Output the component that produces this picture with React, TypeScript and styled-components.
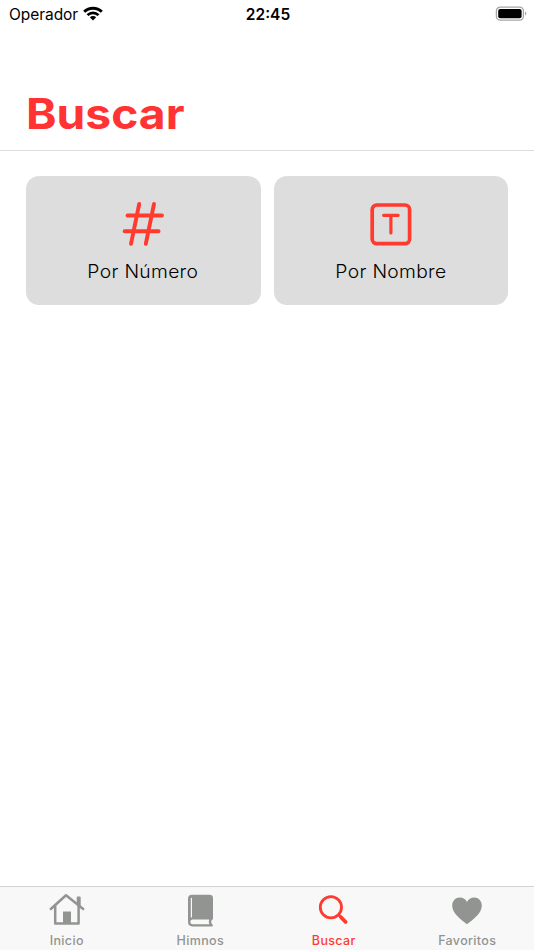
import React from "react";
import styled, { createGlobalStyle } from "styled-components";

const GlobalStyle = createGlobalStyle`
  * { box-sizing: border-box; }
  html, body { margin: 0; padding: 0; background: #fff; }
  body { font-family: Inter, "Liberation Sans", sans-serif; color: #000; overflow: hidden; }
  svg { display: block; }
`;

const Screen = styled.div`
  display: flex;
  flex-direction: column;
  width: 534px;
  height: 950px;
  background: #fff;
`;

const StatusBar = styled.div`
  display: grid;
  grid-template-columns: 1fr auto 1fr;
  align-items: center;
  height: 27px;
  padding: 0 7px 0 9px;
  flex: none;
`;

const Carrier = styled.div`
  display: flex;
  align-items: center;
  gap: 5px;
  font-size: 15.5px;
  line-height: 27px;
  letter-spacing: -0.05px;
`;

const CarrierName = styled.span`
  padding-top: 1px;
`;

const Clock = styled.div`
  padding-top: 1px;
  font-size: 15.5px;
  font-weight: 600;
  line-height: 27px;
  letter-spacing: 0;
`;

const Battery = styled.div`
  justify-self: end;
`;

const Header = styled.header`
  display: flex;
  align-items: flex-end;
  height: 124px;
  padding: 0 26px 10px;
  border-bottom: 1px solid #dcdcdc;
  flex: none;
`;

const Title = styled.h1`
  margin: 0;
  font-size: 42px;
  line-height: 52px;
  font-weight: 700;
  color: #ff3333;
  transform: scaleX(1.1);
  transform-origin: left;
`;

const Content = styled.main`
  flex: 1;
  display: grid;
  grid-template-columns: 1fr 1fr;
  align-content: start;
  gap: 13px;
  padding: 25px 26px;
`;

const Card = styled.button`
  display: flex;
  flex-direction: column;
  align-items: center;
  height: 129px;
  padding: 24px 0 0;
  border: 0;
  border-radius: 13px;
  background: #dddddd;
  font-family: inherit;
  color: #000;
`;

const CardLabel = styled.span`
  margin-top: 12px;
  font-size: 18px;
  line-height: 24px;
  font-weight: 350;
  letter-spacing: 0.3px;
  transform: scaleX(1.07);
`;

const TabBar = styled.nav`
  display: grid;
  grid-template-columns: repeat(4, 1fr);
  height: 64px;
  border-top: 1px solid #d2d2d2;
  background: #f8f8f8;
  flex: none;
`;

const Tab = styled.div<{ $active?: boolean }>`
  display: flex;
  flex-direction: column;
  align-items: center;
  padding-top: 4px;
  color: ${(p) => (p.$active ? "#ff3b30" : "#929492")};
`;

const TabLabel = styled.span<{ $active?: boolean }>`
  margin-top: 4px;
  font-size: 12.5px;
  line-height: 16px;
  font-weight: ${(p) => (p.$active ? 550 : 500)};
  letter-spacing: 0.35px;
`;

const WifiIcon = () => (
  <svg width="20" height="16" viewBox="0 0 20 16" fill="none" stroke="#000" strokeWidth="3">
    <path d="M1.2 5.8C6.1 1 13.9 1 18.8 5.8" />
    <path d="M4.5 9.1C7.6 6.1 12.4 6.1 15.5 9.1" strokeWidth="2.7" />
    <path d="M6.8 11.3C8.6 9.7 11.4 9.7 13.2 11.3L10 14.6Z" fill="#000" stroke="none" />
  </svg>
);

const BatteryIcon = () => (
  <svg width="32" height="16" viewBox="0 0 32 16">
    <rect x="1.4" y="1.1" width="27" height="13" rx="3.8" fill="none" stroke="#a5a5a5" strokeWidth="1.3" />
    <rect x="3.2" y="3" width="23.4" height="9.2" rx="2" fill="#000" />
    <path d="M30 5.6C31.8 6.2 31.8 9 30 9.6Z" fill="#a5a5a5" />
  </svg>
);

const HashIcon = () => (
  <svg width="46" height="48" viewBox="0 0 46 48" fill="none" stroke="#ff3b30" strokeWidth="3.9" strokeLinecap="round">
    <path d="M19.2 4L11 43.8M34 4L25.8 43.8M7.5 15.5H42M4.6 31.2H38.6" />
  </svg>
);

const LetterIcon = () => (
  <svg width="46" height="48" viewBox="0 0 46 48" fill="none" stroke="#ff3b30" strokeLinecap="round">
    <rect x="4.2" y="5" width="37.4" height="38.7" rx="4.6" strokeWidth="3.7" />
    <path d="M15.6 15.3H30.2M22.9 15.3V33" strokeWidth="3.2" />
  </svg>
);

const HomeIcon = () => (
  <svg width="38" height="38" viewBox="0 0 38 38" fill="none" stroke="currentColor" strokeWidth="2.5" strokeLinecap="round" strokeLinejoin="round">
    <path d="M2.8 18L18 4.3L35.2 18" />
    <path d="M29.7 13V6.5H31.7V15" strokeWidth="2" />
    <path d="M7.2 15V32.5H30.6V15" />
    <path d="M15 20.5H23V32.5H15Z" fill="currentColor" stroke="none" />
  </svg>
);

const BookIcon = () => (
  <svg width="38" height="38" viewBox="0 0 38 38">
    <path d="M11 3.8H28.5Q32 3.8 32 7.2V27.5Q32 28.7 30.6 29.2Q29.5 31.2 31 33Q33 35.4 30.5 35.4H11.5Q7 35.4 7 30.5V7.8Q7 3.8 11 3.8Z" fill="currentColor" />
    <path d="M10.4 7.4V26" stroke="#f8f8f8" strokeWidth="1.2" strokeLinecap="round" />
    <path d="M11.8 28.5H28.2Q27.2 31 28.4 33.3H11.8Q9.3 33.3 9.3 31Q9.3 28.5 11.8 28.5Z" fill="#f8f8f8" />
  </svg>
);

const SearchIcon = () => (
  <svg width="38" height="38" viewBox="0 0 38 38" fill="none" stroke="currentColor" strokeLinecap="round">
    <circle cx="15.9" cy="16.3" r="10.6" strokeWidth="2.8" />
    <path d="M23.8 24L25.6 25.8" strokeWidth="2.8" />
    <path d="M26 26.2L30.6 31" strokeWidth="3.8" />
  </svg>
);

const HeartIcon = () => (
  <svg width="38" height="38" viewBox="0 0 38 38">
    <path d="M19 33.2C12.2 28.3 4.2 22.2 4.2 14.6C4.2 9.8 7.6 6.5 11.8 6.5C15 6.5 17.7 8.2 19 11C20.3 8.2 23 6.5 26.2 6.5C30.4 6.5 33.8 9.8 33.8 14.6C33.8 22.2 25.8 28.3 19 33.2Z" fill="currentColor" />
  </svg>
);

const cards = [
  { label: "Por Número", Icon: HashIcon },
  { label: "Por Nombre", Icon: LetterIcon },
];

const tabs = [
  { label: "Inicio", Icon: HomeIcon },
  { label: "Himnos", Icon: BookIcon },
  { label: "Buscar", Icon: SearchIcon, active: true },
  { label: "Favoritos", Icon: HeartIcon },
];

export default function App() {
  return (
    <Screen>
      <GlobalStyle />
      <StatusBar>
        <Carrier>
          <CarrierName>Operador</CarrierName>
          <WifiIcon />
        </Carrier>
        <Clock>22:45</Clock>
        <Battery>
          <BatteryIcon />
        </Battery>
      </StatusBar>
      <Header>
        <Title>Buscar</Title>
      </Header>
      <Content>
        {cards.map(({ label, Icon }) => (
          <Card key={label}>
            <Icon />
            <CardLabel>{label}</CardLabel>
          </Card>
        ))}
      </Content>
      <TabBar>
        {tabs.map(({ label, Icon, active }) => (
          <Tab key={label} $active={active}>
            <Icon />
            <TabLabel $active={active}>{label}</TabLabel>
          </Tab>
        ))}
      </TabBar>
    </Screen>
  );
}
